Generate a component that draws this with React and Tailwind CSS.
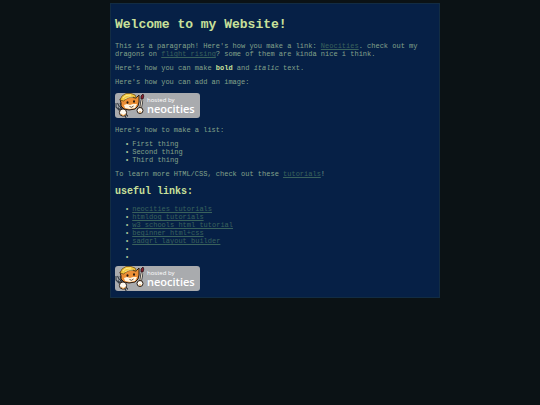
import React from "react";

const things = ["First thing", "Second thing", "Third thing"];

const usefulLinks = [
  "neocities tutorials",
  "htmldog tutorials",
  "w3 schools html tutorial",
  "beginner html+css",
  "sadgrl layout builder",
  "",
  "",
];

const TextLink = ({ children }) => (
  <a href="#" className="text-[#3a625c] underline">
    {children}
  </a>
);

const BulletList = ({ children }) => <ul className="pl-[10px]">{children}</ul>;

const Bullet = ({ children }) => (
  <li className="flex h-2 gap-[3px] before:text-[#a9c39a] before:content-['•']">
    {children}
  </li>
);

const HostedBadge = () => (
  <svg
    viewBox="0 0 85 25"
    className="block h-[25px] w-[85px]"
    role="img"
    aria-label="hosted by neocities"
  >
    <rect width="85" height="25" rx="3" fill="#a9abae" />

    {/* Fork */}
    <path d="M4 14l8 10" stroke="#1c1d20" strokeWidth="3" />
    <path d="M4 14l8 10" stroke="#aab4bc" strokeWidth="1.2" />
    <path d="M1 10v4l3 3 3-2-2-5M2.500 10l2 4" fill="none" stroke="#3b434b" strokeWidth="1.2" />

    {/* Brush */}
    <path d="M27 7l-2 12" stroke="#1c1d20" strokeWidth="2.400" />
    <path d="M27 7l-2 12" stroke="#e8dcc8" strokeWidth="1.2" />
    <path d="M26 6l0-3L28 1l.8 2-.8 3z" fill="#8d2130" stroke="#2a1418" strokeWidth=".8" />

    {/* Cat */}
    <path
      d="M6 10l-1-4 4 0 6-2 6 1 3-3 0 7-1 4-3 3-6 1-5-1-3-3z"
      fill="#ec8f35"
      stroke="#2b1c12"
      strokeWidth="1"
    />
    <path d="M9 12l3-1 3 1 3-1 4 0-2 4-5 1-5-1z" fill="#fff4df" />
    <path
      d="M5 7l2-4 4-2.500 5 0 4 1.500 1.500 3-4-1-5 1-4 3z"
      fill="#f3c93e"
      stroke="#6b4a17"
      strokeWidth=".8"
    />
    <path d="M8 5l3-2.500 5-.5M10 6l4-2 4 0" fill="none" stroke="#fff0a0" strokeWidth=".8" />
    <ellipse cx="12.500" cy="9.500" rx="1" ry="1.300" fill="#25180f" />
    <ellipse cx="19" cy="8.500" rx="1" ry="1.300" fill="#25180f" />
    <path d="M14.500 13.500l2 .8 2-1.300" fill="none" stroke="#3a2617" strokeWidth=".8" />

    {/* Paws */}
    <circle cx="8" cy="19.500" r="3.600" fill="#fffaf0" stroke="#2b1c12" strokeWidth="1" />
    <path d="M6 21l2 1.500 2.500-1" fill="none" stroke="#e99b3f" strokeWidth="1" />
    <circle cx="25" cy="17.500" r="3" fill="#fffaf0" stroke="#2b1c12" strokeWidth="1" />
    <path d="M24 19l2 0" stroke="#e99b3f" strokeWidth="1" />

    <text x="32" y="9" fill="#fff" fontSize="6" fontFamily="Open Sans, sans-serif">
      hosted by
    </text>
    <text
      x="32"
      y="20"
      fill="#fff"
      fontSize="11"
      fontWeight="600"
      fontFamily="Open Sans, sans-serif"
    >
      neocities
    </text>
  </svg>
);

const App = () => {
  return (
    <div className="min-h-screen bg-[#0b1215] pt-[3px] pr-[100px] pl-[110px] font-['Liberation_Mono','Courier_New',monospace] text-[7px] leading-[8px] text-[#83a28b]">
      <main className="border border-[#122c43] bg-[#062046] px-1 pt-3 pb-1.5">
        <h1 className="mb-2 text-[13px] leading-[18px] font-bold text-[#c9e09a]">
          Welcome to my Website!
        </h1>

        <div className="space-y-1.5">
          <p>
            This is a paragraph! Here's how you make a link:{" "}
            <TextLink>Neocities</TextLink>. check out my dragons on{" "}
            <TextLink>flight rising</TextLink>? some of them are kinda nice i
            think.
          </p>
          <p>
            Here's how you can make{" "}
            <strong className="text-[#c9e09a]">bold</strong> and <em>italic</em>{" "}
            text.
          </p>
          <p>Here's how you can add an image:</p>
          <div className="pt-px pb-0.5">
            <HostedBadge />
          </div>
          <p>Here's how to make a list:</p>
          <BulletList>
            {things.map((thing) => (
              <Bullet key={thing}>{thing}</Bullet>
            ))}
          </BulletList>
          <p>
            To learn more HTML/CSS, check out these{" "}
            <TextLink>tutorials</TextLink>!
          </p>
        </div>

        <h2 className="mt-2 mb-[7px] text-[10px] leading-[12px] font-bold text-[#c9e09a]">
          useful links:
        </h2>

        <BulletList>
          {usefulLinks.map((label, i) => (
            <Bullet key={i}>{label && <TextLink>{label}</TextLink>}</Bullet>
          ))}
        </BulletList>
        <div className="pt-[5px]">
          <HostedBadge />
        </div>
      </main>
    </div>
  );
};

export default App;
